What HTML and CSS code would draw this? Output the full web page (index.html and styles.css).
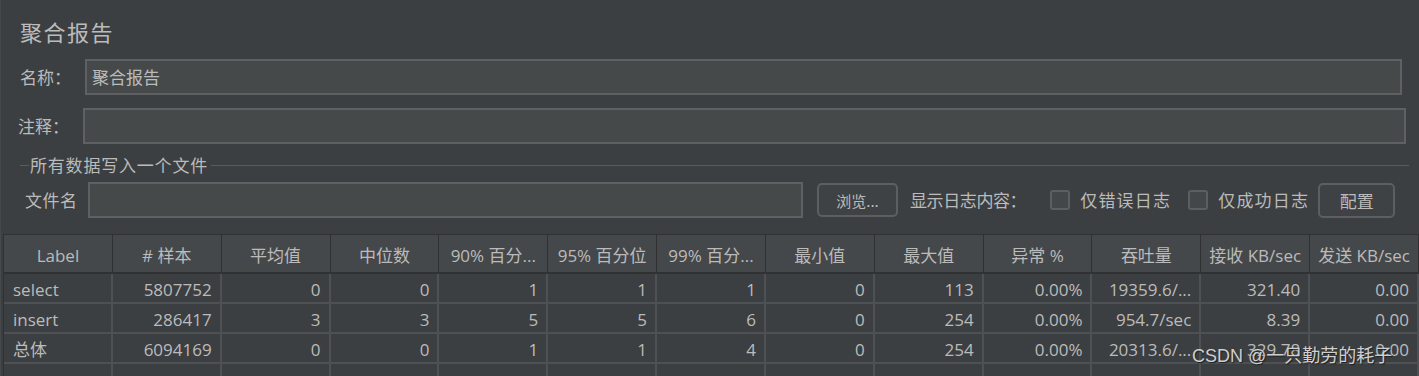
FILE: index.html
```html
<!DOCTYPE html>
<html lang="zh-CN">
<head>
<meta charset="utf-8">
<title>聚合报告</title>
<link rel="stylesheet" href="styles.css">
</head>
<body>
<div class="panel">
  <div class="title">聚合报告</div>
  <div class="row row-name">
    <span class="label label-name">名称：</span>
    <div class="input input-name">聚合报告</div>
  </div>
  <div class="row row-comment">
    <span class="label label-comment">注释：</span>
    <div class="input input-comment"></div>
  </div>
  <div class="legend">
    <span class="legend-lead"></span>
    <span class="legend-text">所有数据写入一个文件</span>
    <span class="legend-rule"></span>
  </div>
  <div class="row row-file">
    <span class="label label-file">文件名</span>
    <div class="input input-file"></div>
    <div class="button button-browse">浏览...</div>
    <span class="text text-show">显示日志内容：</span>
    <span class="checkbox cb-1"></span>
    <span class="text text-err">仅错误日志</span>
    <span class="checkbox cb-2"></span>
    <span class="text text-ok">仅成功日志</span>
    <div class="button button-config">配置</div>
  </div>
  <div class="table">
    <div class="trow thead">
      <div class="th">Label</div>
      <div class="th"># 样本</div>
      <div class="th">平均值</div>
      <div class="th">中位数</div>
      <div class="th">90% 百分...</div>
      <div class="th">95% 百分位</div>
      <div class="th">99% 百分...</div>
      <div class="th">最小值</div>
      <div class="th">最大值</div>
      <div class="th">异常 %</div>
      <div class="th">吞吐量</div>
      <div class="th">接收 KB/sec</div>
      <div class="th">发送 KB/sec</div>
    </div>
    <div class="trow">
      <div class="td left">select</div>
      <div class="td">5807752</div>
      <div class="td">0</div>
      <div class="td">0</div>
      <div class="td">1</div>
      <div class="td">1</div>
      <div class="td">1</div>
      <div class="td">0</div>
      <div class="td">113</div>
      <div class="td">0.00%</div>
      <div class="td">19359.6/...</div>
      <div class="td">321.40</div>
      <div class="td">0.00</div>
    </div>
    <div class="trow">
      <div class="td left">insert</div>
      <div class="td">286417</div>
      <div class="td">3</div>
      <div class="td">3</div>
      <div class="td">5</div>
      <div class="td">5</div>
      <div class="td">6</div>
      <div class="td">0</div>
      <div class="td">254</div>
      <div class="td">0.00%</div>
      <div class="td">954.7/sec</div>
      <div class="td">8.39</div>
      <div class="td">0.00</div>
    </div>
    <div class="trow">
      <div class="td left">总体</div>
      <div class="td">6094169</div>
      <div class="td">0</div>
      <div class="td">0</div>
      <div class="td">1</div>
      <div class="td">1</div>
      <div class="td">4</div>
      <div class="td">0</div>
      <div class="td">254</div>
      <div class="td">0.00%</div>
      <div class="td">20313.6/...</div>
      <div class="td">329.78</div>
      <div class="td">0.00</div>
    </div>
    <div class="trow">
      <div class="td left"></div>
      <div class="td"></div>
      <div class="td"></div>
      <div class="td"></div>
      <div class="td"></div>
      <div class="td"></div>
      <div class="td"></div>
      <div class="td"></div>
      <div class="td"></div>
      <div class="td"></div>
      <div class="td"></div>
      <div class="td"></div>
      <div class="td"></div>
    </div>
  </div>
  <div class="watermark">CSDN @一只勤劳的耗子</div>
</div>
</body>
</html>
```

FILE: styles.css
```css
* { box-sizing: border-box; }
html, body {
  margin: 0;
  padding: 0;
  background: #3c3f41;
  overflow: hidden;
}
body {
  width: 1419px;
  height: 376px;
  font-family: "Open Sans", "Noto Sans CJK SC", sans-serif;
  color: #bbbbbb;
}
.panel {
  position: relative;
  height: 376px;
  border-left: 1px solid #46494b;
  display: flex;
  flex-direction: column;
}
.title {
  margin-top: 20px;
  margin-left: 19px;
  font-family: "Noto Sans CJK SC", sans-serif;
  font-size: 22px;
  line-height: 22px;
  letter-spacing: 1.5px;
  height: 22px;
}
.row {
  display: flex;
  align-items: center;
}
.label {
  font-family: "Noto Sans CJK SC", sans-serif;
  font-size: 17px;
  line-height: 20px;
  flex: none;
}
.input {
  height: 36px;
  background: #45494a;
  border: 2px solid #5e6061;
  font-family: "Noto Sans CJK SC", sans-serif;
  font-size: 17px;
  line-height: 32px;
  padding-left: 5px;
  color: #bbbbbb;
  flex: none;
}
.row-name { margin-top: 17px; }
.label-name { width: 65px; margin-left: 19px; }
.input-name { width: 1317px; }
.row-comment { margin-top: 13px; }
.label-comment { width: 65px; margin-left: 17px; }
.input-comment { width: 1323px; }

.legend {
  margin-top: 13px;
  height: 16px;
  display: flex;
  align-items: center;
  margin-left: 19px;
}
.legend-lead {
  width: 9px;
  height: 1px;
  background: #5a5d5f;
  flex: none;
}
.legend-text {
  font-family: "Noto Sans CJK SC", sans-serif;
  font-size: 17px;
  line-height: 16px;
  letter-spacing: 0.8px;
  padding: 0 3px 0 1px;
  flex: none;
}
.legend-rule {
  width: 1198px;
  height: 1px;
  background: #5a5d5f;
  flex: none;
}

.row-file { margin-top: 9px; height: 36px; }
.label-file { width: 63px; margin-left: 24px; letter-spacing: 0.5px; }
.input-file { width: 715px; }
.button {
  height: 34px;
  border: 2px solid #5c5f60;
  border-radius: 5px;
  background: #3f4244;
  font-family: "Noto Sans CJK SC", sans-serif;
  display: flex;
  align-items: center;
  justify-content: center;
  flex: none;
  color: #bbbbbb;
}
.button-browse { width: 81px; margin-left: 14px; font-size: 15px; }
.button-config { width: 77px; margin-left: 9px; font-size: 17px; height: 35px; }
.text {
  font-family: "Noto Sans CJK SC", sans-serif;
  font-size: 17px;
  line-height: 20px;
  flex: none;
}
.text-show { margin-left: 12px; letter-spacing: -0.4px; }
.text-err, .text-ok { margin-left: 10px; letter-spacing: 1.2px; }
.checkbox {
  width: 20px;
  height: 20px;
  border: 2px solid #5c5f60;
  border-radius: 3px;
  background: #43474a;
  flex: none;
}
.cb-1 { margin-left: 24px; }
.cb-2 { margin-left: 17px; }

.table {
  margin-top: 16px;
  margin-left: 2px;
  width: 1416px;
  border-left: 1px solid #2f3133;
  flex: none;
}
.trow {
  display: grid;
  grid-template-columns: repeat(13, 1fr);
  height: 30px;
  border-bottom: 2px solid #4e5153;
}
.thead {
  height: 40px;
  background: #45484a;
  border-top: 1px solid #2f3133;
  border-bottom: 2px solid #2f3133;
}
.th {
  text-align: center;
  font-size: 17px;
  line-height: 37px;
  padding-top: 2px;
  white-space: nowrap;
  overflow: hidden;
  border-right: 1px solid #2f3133;
}
.td {
  text-align: right;
  font-size: 17px;
  line-height: 28px;
  padding: 2px 8px 0 9px;
  white-space: nowrap;
  overflow: hidden;
  border-right: 2px solid #4e5153;
}
.td.left { text-align: left; }

.watermark {
  position: absolute;
  left: 1191px;
  top: 345px;
  font-family: "Liberation Sans", "Noto Sans CJK SC", sans-serif;
  font-size: 18px;
  line-height: 22px;
  color: #cfcfcf;
  text-shadow: 1px 1px 1px #1e1e1e;
  white-space: nowrap;
}
```
